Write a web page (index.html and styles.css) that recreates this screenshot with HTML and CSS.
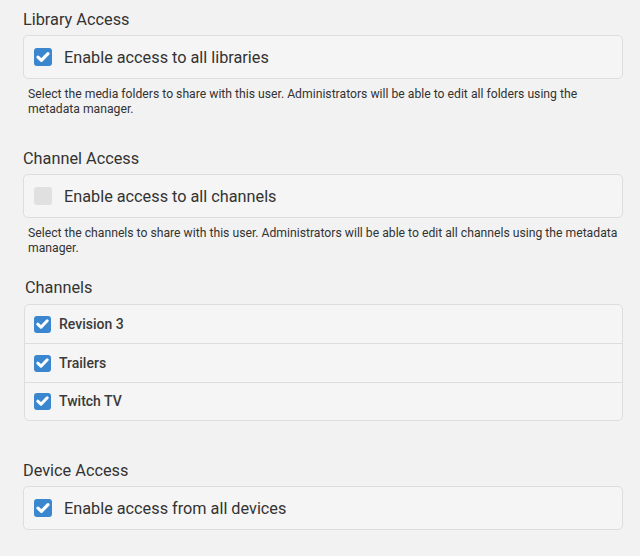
FILE: index.html
```html
<!DOCTYPE html>
<html>
<head>
<meta charset="utf-8">
<link rel="stylesheet" href="styles.css">
</head>
<body>
<div class="page">
  <section class="section">
    <h2 class="heading">Library Access</h2>
    <label class="box">
      <span class="check on"><svg viewBox="0 0 18 18"><path d="M4 9.2 L7.4 12.4 L14 5.6" /></svg></span>
      <span class="box-label">Enable access to all libraries</span>
    </label>
    <p class="desc">Select the media folders to share with this user. Administrators will be able to edit all folders using the metadata manager.</p>
  </section>

  <section class="section s2">
    <h2 class="heading">Channel Access</h2>
    <label class="box">
      <span class="check off"></span>
      <span class="box-label">Enable access to all channels</span>
    </label>
    <p class="desc">Select the channels to share with this user. Administrators will be able to edit all channels using the metadata manager.</p>
  </section>

  <section class="section s3">
    <h3 class="subheading">Channels</h3>
    <div class="list">
      <label class="row"><span class="check on small"><svg viewBox="0 0 18 18"><path d="M4 9.2 L7.4 12.4 L14 5.6" /></svg></span><span class="row-label">Revision 3</span></label>
      <label class="row"><span class="check on small"><svg viewBox="0 0 18 18"><path d="M4 9.2 L7.4 12.4 L14 5.6" /></svg></span><span class="row-label">Trailers</span></label>
      <label class="row"><span class="check on small"><svg viewBox="0 0 18 18"><path d="M4 9.2 L7.4 12.4 L14 5.6" /></svg></span><span class="row-label">Twitch TV</span></label>
    </div>
  </section>

  <section class="section s4">
    <h2 class="heading">Device Access</h2>
    <label class="box">
      <span class="check on"><svg viewBox="0 0 18 18"><path d="M4 9.2 L7.4 12.4 L14 5.6" /></svg></span>
      <span class="box-label">Enable access from all devices</span>
    </label>
  </section>
</div>
</body>
</html>
```

FILE: styles.css
```css
html, body {
  margin: 0;
  padding: 0;
  background: #f2f2f2;
}
body {
  font-family: Roboto, "Noto Sans", "Liberation Sans", sans-serif;
  color: #333;
  width: 640px;
  height: 556px;
  overflow: hidden;
}
.page {
  padding: 10px 17px 0 23px;
}
.section {
  display: flex;
  flex-direction: column;
}
.heading {
  margin: 0 0 5px 0;
  font-size: 16.3px;
  font-weight: 400;
  line-height: 20px;
  color: #333;
}
.box {
  display: flex;
  align-items: center;
  height: 42px;
  border: 1px solid #dddddd;
  border-radius: 5px;
  background: #f5f5f5;
  padding: 0 0 0 10px;
}
.check {
  width: 18px;
  height: 18px;
  border-radius: 3px;
  display: flex;
  align-items: center;
  justify-content: center;
  flex: none;
}
.check.on {
  background: #3a87d0;
}
.check.off {
  background: #e0e0e0;
}
.check svg {
  width: 18px;
  height: 18px;
}
.check svg path {
  fill: none;
  stroke: #fff;
  stroke-width: 3.2;
  stroke-linecap: round;
  stroke-linejoin: round;
}
.box-label {
  margin-left: 12px;
  font-size: 16.25px;
  font-weight: 400;
  color: #333;
}
.desc {
  margin: 8px 0 0 5px;
  font-size: 12.2px;
  line-height: 15px;
  color: #333;
}
.s2 {
  margin-top: 32px;
}
.s3 {
  margin-top: 22px;
}
.subheading {
  margin: 0 0 6px 2px;
  font-size: 16.3px;
  font-weight: 400;
  line-height: 20px;
  color: #333;
}
.list {
  border: 1px solid #dddddd;
  border-radius: 5px;
  background: #f5f5f5;
  margin-left: 1px;
}
.row {
  display: flex;
  align-items: center;
  box-sizing: border-box;
  height: 38.4px;
  padding-left: 9px;
}
.row + .row {
  border-top: 1px solid #dddddd;
}
.check.small {
  width: 17px;
  height: 17px;
}
.row-label {
  margin-left: 8px;
  font-size: 14px;
  font-weight: 500;
  color: #3a3a3a;
}
.s4 {
  margin-top: 40px;
}
```
